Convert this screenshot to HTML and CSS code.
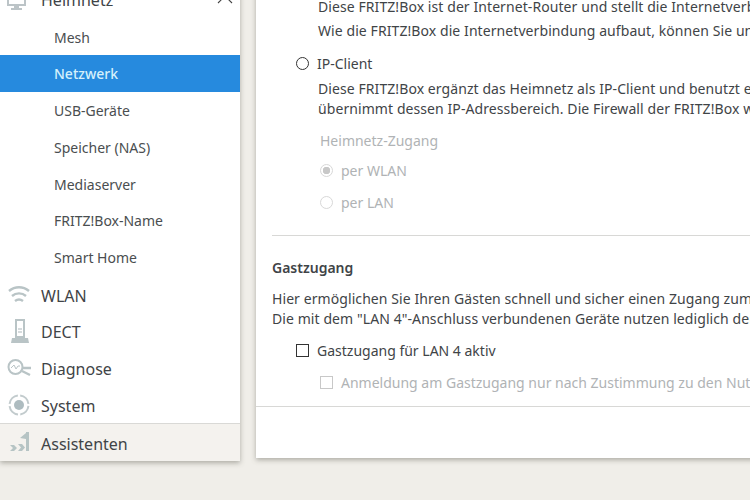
FILE: index.html
```html
<!DOCTYPE html>
<html lang="de">
<head>
<meta charset="utf-8">
<title>FRITZ!Box Netzwerk</title>
<link rel="stylesheet" href="styles.css">
</head>
<body>
<div class="page">
  <nav class="sidebar">
    <div class="menu">
      <div class="item head">
        <svg class="icon" viewBox="0 0 24 24"><rect x="1" y="1" width="17" height="16" fill="none" stroke="#bcc4c7" stroke-width="2"/><rect x="7" y="17" width="5" height="3" fill="#bcc4c7"/><rect x="4" y="20" width="11" height="2" fill="#bcc4c7"/><path d="M20 7h6M20 11h5" stroke="#ccd2d4" stroke-width="2"/></svg>
        <span>Heimnetz</span>
        <svg class="chev" viewBox="0 0 16 9"><path d="M1 8l7-7 7 7" fill="none" stroke="#444" stroke-width="1.1"/></svg>
      </div>
      <div class="sub">Mesh</div>
      <div class="sub active">Netzwerk</div>
      <div class="sub">USB-Geräte</div>
      <div class="sub">Speicher (NAS)</div>
      <div class="sub">Mediaserver</div>
      <div class="sub">FRITZ!Box-Name</div>
      <div class="sub">Smart Home</div>
      <div class="item">
        <svg class="icon" viewBox="0 0 24 24"><g fill="none" stroke="#b9c4c6" stroke-width="2.4"><path d="M2 8c6-5 14-5 20 0"/><path d="M5 13c4-3.500 10-3.500 14 0"/><path d="M8 18c2.500-2 5.500-2 8 0"/></g></svg>
        <span>WLAN</span>
      </div>
      <div class="item">
        <svg class="icon" viewBox="0 0 24 24"><path d="M9 1h8v17H9z" fill="none" stroke="#b9c4c6" stroke-width="2"/><path d="M11 10h4M11 13h4" stroke="#c9d0d2" stroke-width="1.500"/><path d="M8 17h10v2h3l1 5H4l1-5h3z" fill="#b9c4c6"/></svg>
        <span>DECT</span>
      </div>
      <div class="item">
        <svg class="icon" viewBox="0 0 24 24"><circle cx="8.500" cy="11" r="7" fill="none" stroke="#b9c4c6" stroke-width="2"/><path d="M4 12l3-3 2 4 2-3h2" fill="none" stroke="#b9c4c6" stroke-width="1"/><path d="M16 12h8M15 15l8 4" stroke="#b9c4c6" stroke-width="2.400"/></svg>
        <span>Diagnose</span>
      </div>
      <div class="item">
        <svg class="icon" viewBox="0 0 24 24"><circle cx="12" cy="12" r="9.500" fill="none" stroke="#c2cbcd" stroke-width="2" stroke-dasharray="12.500 2.400" stroke-dashoffset="-1"/><circle cx="12" cy="12" r="5" fill="#aebcc0"/></svg>
        <span>System</span>
      </div>
    </div>
    <div class="item foot">
      <svg class="icon" viewBox="0 0 24 24"><path d="M19 1h3v19h-3zM13 7l6-5v6zM3 14l3 3-3 3H7l3-3-3-3zM11 13l3 3.500-3 3.500h4l3-3.500-3-3.500z" fill="#b6c4c4"/></svg>
      <span>Assistenten</span>
    </div>
  </nav>
  <main class="content">
    <section class="section network">
      <p class="text">Diese FRITZ!Box ist der Internet-Router und stellt die Internetverbindung für das Heimnetz bereit.</p>
      <p class="text how">Wie die FRITZ!Box die Internetverbindung aufbaut, können Sie unter „Internet“ einstellen.</p>
      <label class="option client"><span class="radio"></span>IP-Client</label>
      <p class="text desc">Diese FRITZ!Box ergänzt das Heimnetz als IP-Client und benutzt eine bestehende Internetverbindung und<br>übernimmt dessen IP-Adressbereich. Die Firewall der FRITZ!Box wird dabei deaktiviert.</p>
      <div class="group">Heimnetz-Zugang</div>
      <label class="option muted wlan"><span class="radio off on"></span>per WLAN</label>
      <label class="option muted lan"><span class="radio off"></span>per LAN</label>
    </section>
    <section class="section guest">
      <h2 class="title">Gastzugang</h2>
      <p class="text tight">Hier ermöglichen Sie Ihren Gästen schnell und sicher einen Zugang zum Internet und zu Ihrem Heimnetz.<br>Die mit dem "LAN 4"-Anschluss verbundenen Geräte nutzen lediglich den Internetzugang.</p>
      <label class="option check"><span class="box"></span>Gastzugang für LAN 4 aktiv</label>
      <label class="option muted subcheck"><span class="box off"></span>Anmeldung am Gastzugang nur nach Zustimmung zu den Nutzungsbedingungen</label>
    </section>
    <div class="rule"></div>
  </main>
</div>
</body>
</html>
```
FILE: styles.css
```css
html, body { margin: 0; height: 100%; }
body {
  background: #f0eee9;
  overflow: hidden;
  font-family: "Noto Sans", "Liberation Sans", sans-serif;
  color: #3f4447;
}
.page {
  display: flex;
  align-items: flex-start;
  gap: 16px;
  margin-top: -19px;
  width: 1100px;
}
.sidebar {
  flex: none;
  width: 240px;
  background: #fff;
  box-shadow: 0 2px 5px rgba(90, 90, 80, .45);
}
.menu { display: flex; flex-direction: column; }
.item {
  box-sizing: border-box;
  display: flex;
  align-items: center;
  height: 36.8px;
  padding: 2.400px 0 0 7px;
  font-size: 16px;
}
.item span { margin-left: 10px; }
.icon { width: 24px; height: 24px; flex: none; overflow: visible; margin-top: -2px; }
.head { height: 37.5px; padding-top: 0; }
.head .icon { margin-top: 0; }
.chev { width: 16px; height: 9px; margin-left: auto; margin-right: 7px; }
.sub {
  box-sizing: border-box;
  height: 36.8px;
  padding: 2px 0 0 54px;
  line-height: 34.800px;
  font-size: 14px;
  color: #4a4e50;
}
.sub.active { background: #268ade; color: #d4f0fb; font-weight: 500; }
.foot {
  height: 37.700px;
  background: #f4f2ee;
  border-top: 1px solid #d9d9d6;
}
.content {
  flex: none;
  width: 800px;
  height: 477px;
  background: #fff;
  box-shadow: 0 2px 5px rgba(90, 90, 80, .45);
}
.section { margin-left: 16px; }
.network { padding-top: 16px; }
.text {
  margin: 0 0 0 46px;
  font-size: 14px;
  line-height: 20px;
  letter-spacing: .08px;
  white-space: nowrap;
}
.how { margin-top: 4px; }
.option {
  display: flex;
  align-items: center;
  height: 20px;
  margin: 0;
  font-size: 14px;
  white-space: nowrap;
}
.client { margin-top: 12px; }
.desc { margin-top: 6px; }
.radio {
  box-sizing: border-box;
  flex: none;
  width: 13px;
  height: 13px;
  border: 1.5px solid #333;
  border-radius: 50%;
  margin: 0 8px 0 24px;
}
.muted { color: #b0b3b5; }
.group {
  height: 20px;
  margin: 12px 0 0 48px;
  color: #b0b3b5;
  font-size: 14px;
  line-height: 20px;
}
.radio.off { border: 1px solid #d8d8d8; margin-left: 48px; }
.radio.on { background: radial-gradient(circle, #c8c8c8 0 3.500px, #fff 4px); }
.wlan { margin-top: 9px; }
.lan { margin-top: 12px; }
.guest {
  border-top: 1px solid #d8d8d6;
  margin-top: 23px;
  padding-top: 22px;
}
.title { margin: 0; font-size: 14px; font-weight: 600; line-height: 20px; }
.tight { margin: 11px 0 0; line-height: 19.5px; }
.check { margin-top: 12px; }
.box {
  box-sizing: border-box;
  flex: none;
  width: 13px;
  height: 13px;
  border: 1.5px solid #333;
  margin: 0 8px 0 24px;
}
.box.off { border: 1px solid #c8c8c8; margin-left: 48px; }
.subcheck { margin-top: 12px; }
.rule { margin-top: 14px; border-top: 1px solid #d8d8d6; }
```
